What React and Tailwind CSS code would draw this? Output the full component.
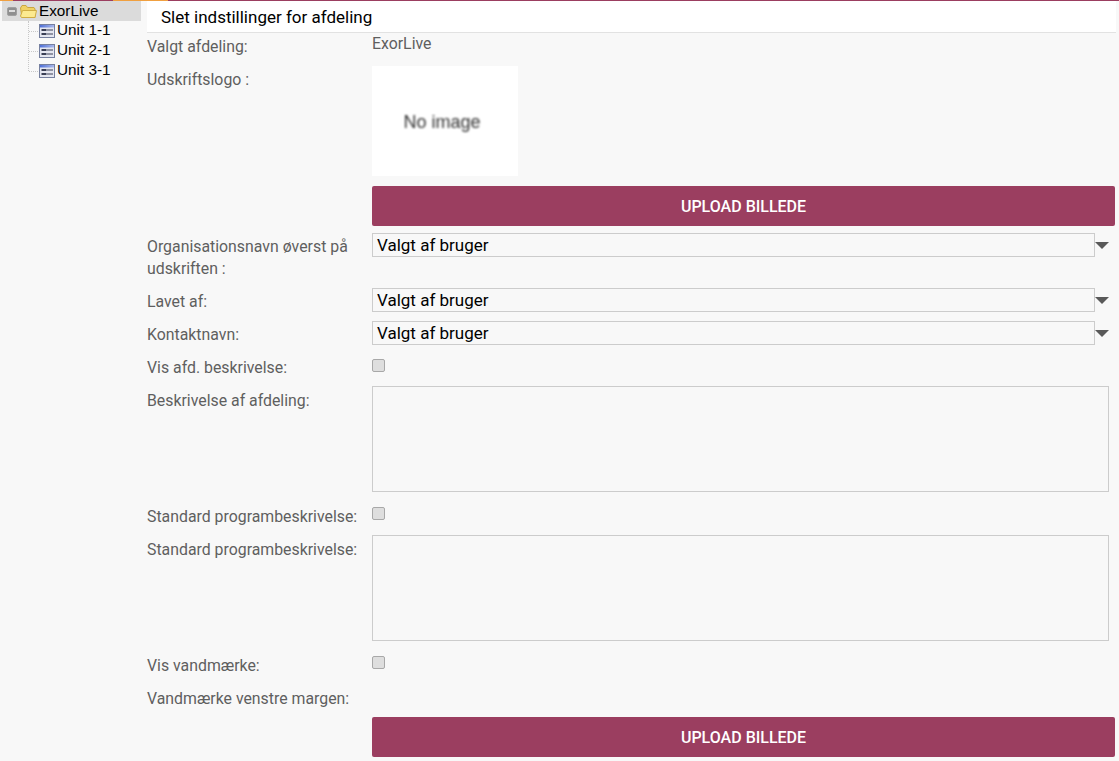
import { useState } from 'react';

const FolderIcon = () => (
    <svg width="17" height="13" viewBox="0 0 17 13" className="shrink-0">
        <path d="M0.5 3 L2 0.5 H6 L7.5 2.5 H14 L15 4 V12.5 H2 Z" fill="#f0d264" stroke="#c9a640" strokeWidth="1" />
        <path d="M0.5 11 L2.5 5.5 H16.5 L15 12.5 H1.5 Z" fill="#fcea90" stroke="#d0ad44" strokeWidth="1" />
    </svg>
);

const UnitIcon = () => (
    <svg width="16" height="14" viewBox="0 0 16 14" className="shrink-0">
        <defs>
            <linearGradient id="unit-bar" x1="0" x2="1" y1="0" y2="0">
                <stop offset="0" stopColor="#4f70d8" />
                <stop offset="1" stopColor="#a9b8ea" />
            </linearGradient>
        </defs>
        <rect x="0.5" y="0.5" width="15" height="13" fill="#e4e6f0" stroke="#76809f" />
        <rect x="1" y="1" width="14" height="2.5" fill="url(#unit-bar)" />
        <rect x="2.5" y="5" width="5" height="2" fill="#3a3f55" />
        <rect x="8" y="5.5" width="6" height="1" fill="#3a3f55" />
        <rect x="2.5" y="9" width="5" height="2" fill="#3a3f55" />
        <rect x="8" y="9.5" width="6" height="1" fill="#3a3f55" />
    </svg>
);

const TreeUnit = ({ name }) => (
    <div className="flex items-center h-5">
        <div className="w-[9px] border-t border-dotted border-[#c8c8c8] mr-[1px]" />
        <UnitIcon />
        <span className="ml-[2px] mb-[2px] text-black">{name}</span>
    </div>
);

const FormRow = ({ label, children, className = '', labelClass = 'pt-[3px]' }) => (
    <div className={`flex ${className}`}>
        <label className={`w-[225px] shrink-0 text-[#5f5f5f] leading-[22px] ${labelClass}`}>{label}</label>
        <div className="flex-1 min-w-0">{children}</div>
    </div>
);

const SelectField = ({ value }) => (
    <div className="flex items-center">
        <div className="w-[723px] h-6 border border-[#cccccc] text-black text-[17px] px-1 leading-[22px]">{value}</div>
        <div className="w-0 h-0 border-x-[7px] border-x-transparent border-t-[7px] border-t-[#595959]" />
    </div>
);

const UploadButton = () => (
    <button className="w-[743px] h-10 pt-[1px] bg-[#9b3e60] rounded-[2px] text-white text-[16px] font-medium">
        UPLOAD BILLEDE
    </button>
);

const Checkbox = ({ className = '' }) => {
    const [checked, setChecked] = useState(false);
    return (
        <input
            type="checkbox"
            checked={checked}
            onChange={(e) => setChecked(e.target.checked)}
            className={`block w-[13px] h-[13px] appearance-none bg-[#dedede] border border-[#a8a8a8] rounded-[2px] checked:bg-[#9b3e60] ${className}`}
        />
    );
};

const App = () => {
    return (
        <div className="h-[761px] overflow-hidden bg-[#f8f8f8] font-['Roboto',sans-serif] text-[15.85px]">
            {/* thin coloured strip along the top */}
            <div className="flex h-px">
                <div className="w-[13px] bg-[#f0a040]" />
                <div className="w-[100px] bg-[#9b3e60]" />
                <div className="w-[55px] bg-[#f0a040]" />
                <div className="flex-1 bg-[#9b3e60]" />
            </div>

            <div className="flex">
                {/* tree on the left */}
                <div className="w-[147px] shrink-0 font-['Liberation_Sans',sans-serif] text-[15.3px] leading-5">
                    <div className="ml-[2px] w-[139px] h-5 bg-[#dbdbdb] flex items-center pl-[5px]">
                        <div className="w-[10px] h-[9px] border border-[#a0a0a0] rounded-[2px] bg-[#8f8f8f] flex items-center justify-center shrink-0">
                            <div className="w-[6px] h-[2px] bg-[#dddddd]" />
                        </div>
                        <div className="ml-[3px]"><FolderIcon /></div>
                        <span className="ml-[2px] text-black">ExorLive</span>
                    </div>
                    <div className="ml-[28px] border-l border-dotted border-[#c8c8c8] h-[50px]">
                        <TreeUnit name="Unit 1-1" />
                        <TreeUnit name="Unit 2-1" />
                        <TreeUnit name="Unit 3-1" />
                    </div>
                </div>

                {/* settings form */}
                <div className="flex-1 min-w-0">
                    <div className="h-[32px] mr-[3px] bg-white border-b border-b-[#e2e2e2] pl-[14px] text-black text-[17px] leading-[32px]">
                        Slet indstillinger for afdeling
                    </div>

                    <FormRow label="Valgt afdeling:" labelClass="pt-[2px]" className="mt-[1px] h-[32px]">
                        <span className="text-[#5f5f5f] leading-[19px] block">ExorLive</span>
                    </FormRow>

                    <FormRow label="Udskriftslogo :">
                        <div className="w-[146px] h-[110px] bg-white flex items-center justify-center pt-[2px] pr-[6px]">
                            <span className="font-['Liberation_Sans',sans-serif] font-medium text-[#333333] text-[18px] blur-[0.8px]">No image</span>
                        </div>
                        <div className="mt-[10px]"><UploadButton /></div>
                    </FormRow>

                    <FormRow label="Organisationsnavn øverst på udskriften :" className="mt-[7px] h-[55px]">
                        <SelectField value="Valgt af bruger" />
                    </FormRow>

                    <FormRow label="Lavet af:" className="h-[33px]">
                        <SelectField value="Valgt af bruger" />
                    </FormRow>

                    <FormRow label="Kontaktnavn:" className="h-[33px]">
                        <SelectField value="Valgt af bruger" />
                    </FormRow>

                    <FormRow label="Vis afd. beskrivelse:" className="h-[32px]">
                        <Checkbox className="mt-[5px]" />
                    </FormRow>

                    <FormRow label="Beskrivelse af afdeling:" labelClass="pt-[4px]">
                        <textarea className="block w-[737px] h-[106px] border border-[#cccccc] bg-[#f8f8f8] resize-none" />
                    </FormRow>

                    <FormRow label="Standard programbeskrivelse:" className="mt-[11px] h-[32px]">
                        <Checkbox className="mt-[4px]" />
                    </FormRow>

                    <FormRow label="Standard programbeskrivelse:" labelClass="pt-[4px]">
                        <textarea className="block w-[737px] h-[106px] border border-[#cccccc] bg-[#f8f8f8] resize-none" />
                    </FormRow>

                    <FormRow label="Vis vandmærke:" className="mt-[11px] h-[33px]">
                        <Checkbox className="mt-[4px]" />
                    </FormRow>

                    <FormRow label="Vandmærke venstre margen:" className="h-[32px]" />

                    <div className="ml-[225px]"><UploadButton /></div>
                </div>
            </div>
        </div>
    );
};

export default App;
